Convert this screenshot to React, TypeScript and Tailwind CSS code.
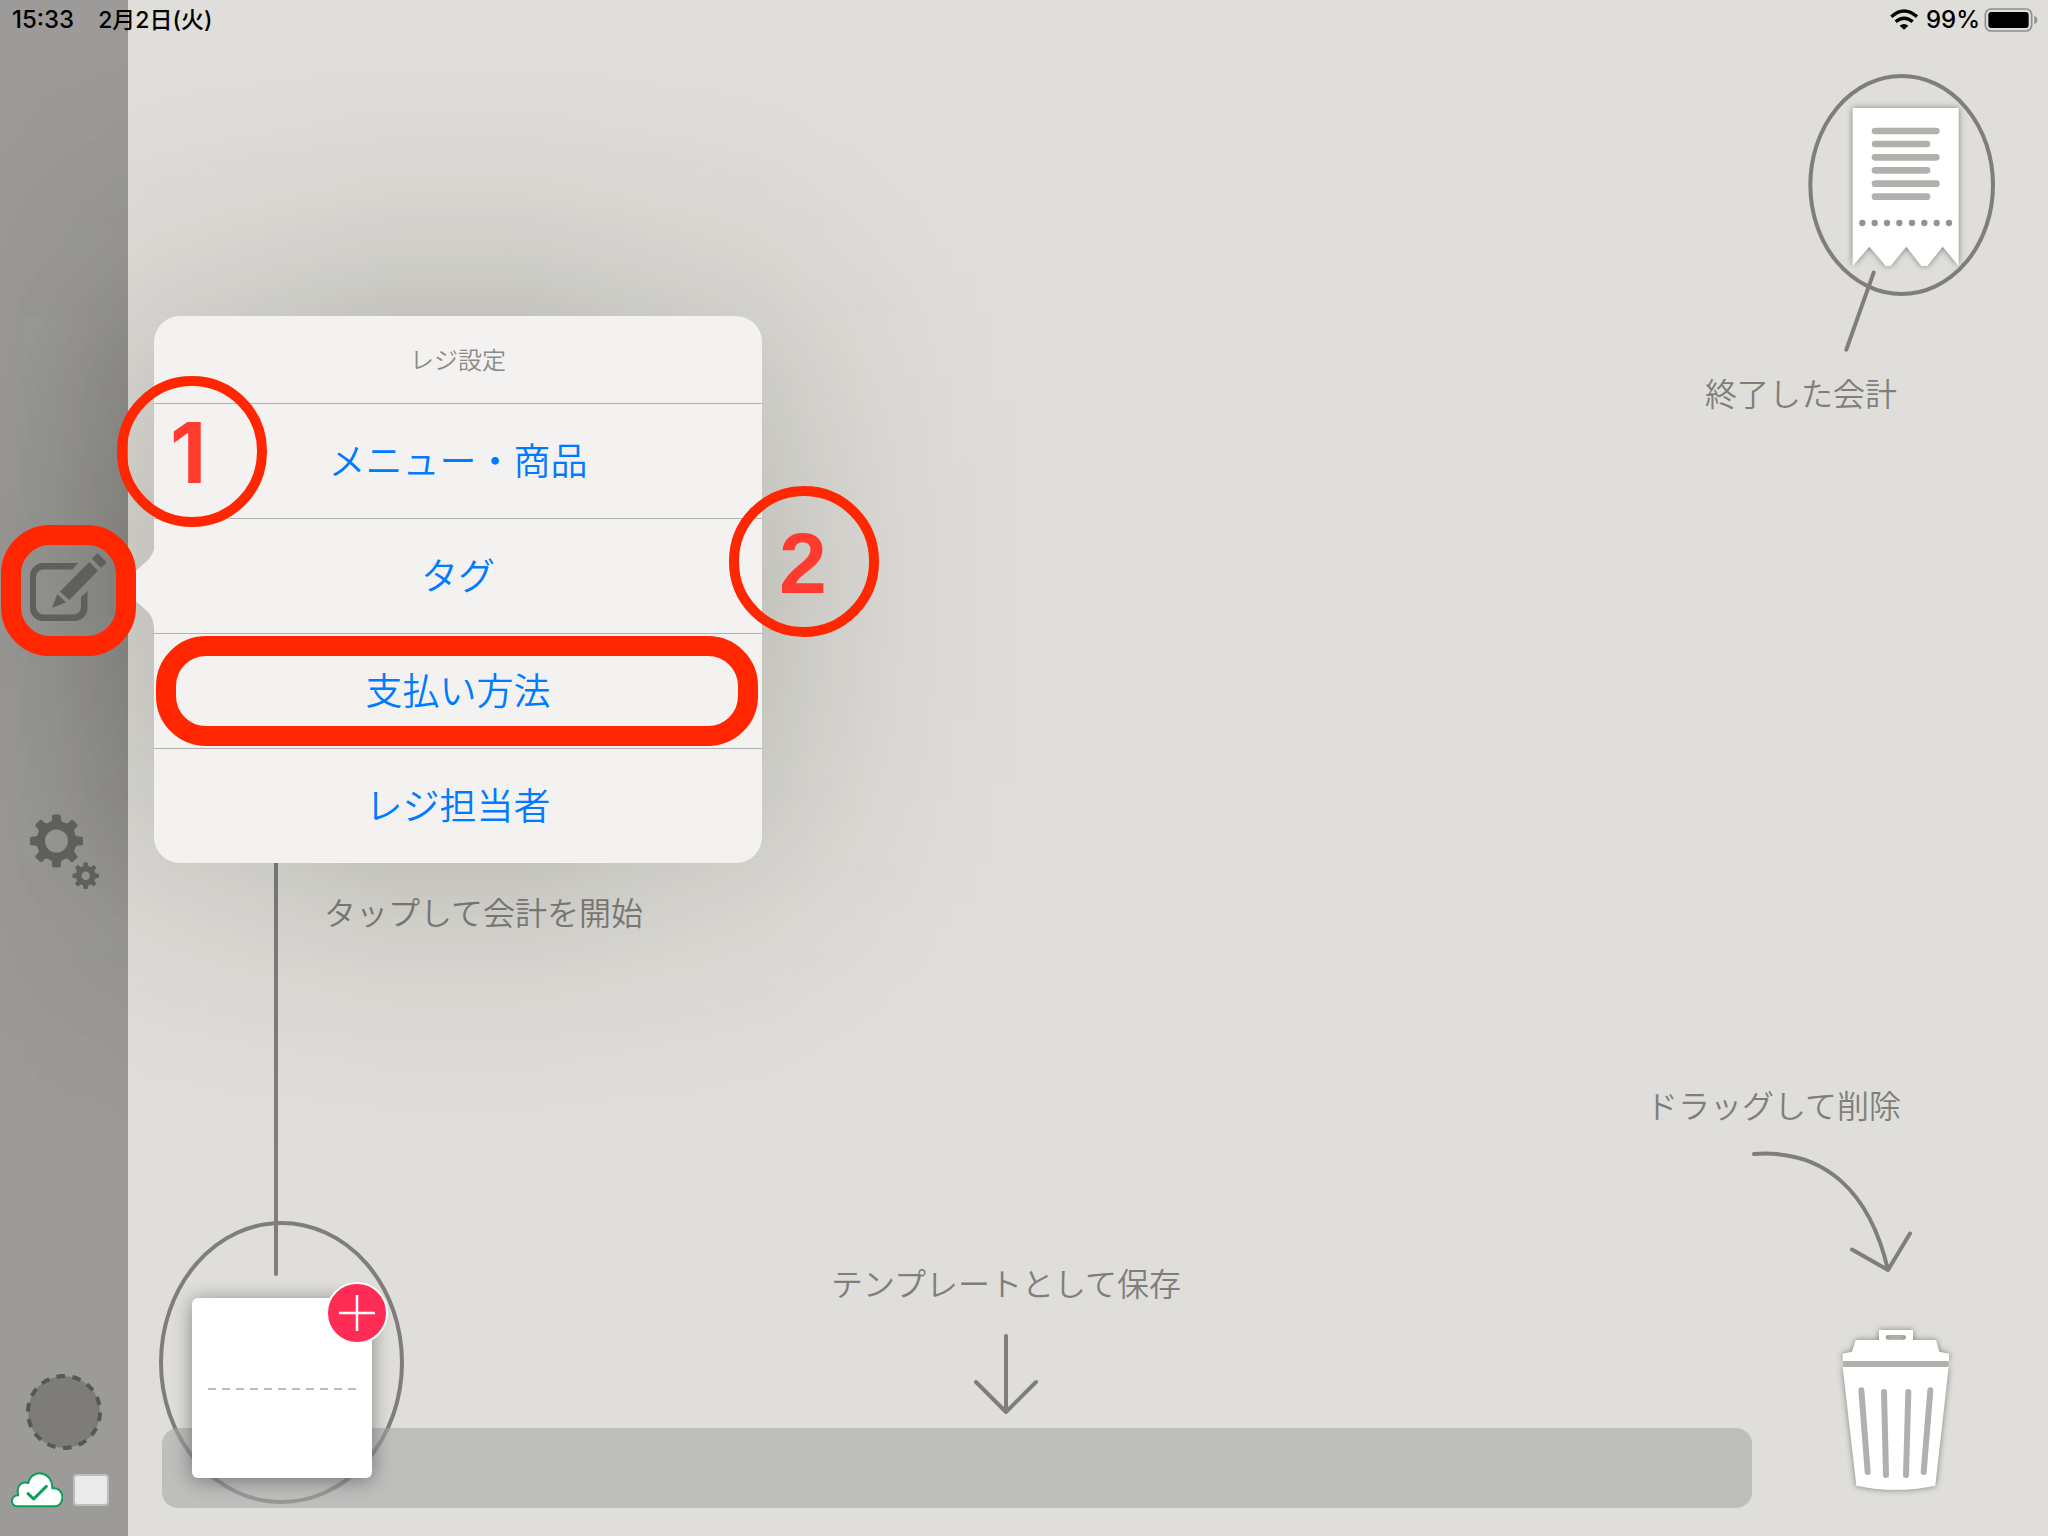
const ANGLES = [0, 45, 90, 135, 180, 225, 270, 315];

function StatusBar() {
  return (
    <header className="pointer-events-none absolute inset-x-0 top-0 z-30 flex h-10 items-center justify-between pl-3 pr-2.5 font-['Inter','Noto_Sans_CJK_JP',sans-serif] text-2xl font-medium text-black">
      <div className="flex items-center gap-6">
        <time>15:33</time>
        <span className="text-[23px]">2月2日(火)</span>
      </div>
      <div className="flex items-center">
        <svg viewBox="90 28 84 66" className="mr-2 h-[22px] w-7" fill="none" stroke="#000" strokeWidth="10" aria-hidden="true">
          <path d="M94 51Q132 17 171 51" />
          <path d="M107 66Q132 45 158 66" />
          <path d="M132 90 119 78Q132 68 145 78Z" fill="#000" stroke="none" />
        </svg>
        <span>99%</span>
        <svg viewBox="374 22 162 76" className="ml-1 h-[26px] w-[54px]" aria-hidden="true">
          <rect x="378" y="27" width="139" height="66" rx="17" fill="none" stroke="#8e8e8b" strokeWidth="5" />
          <rect x="387" y="36" width="121" height="48" rx="9" />
          <path d="M525 48Q534 51 534 60T525 72Z" fill="#8e8e8b" />
        </svg>
      </div>
    </header>
  );
}

function EditIcon() {
  return (
    <svg viewBox="0 548 128 80" className="h-20 w-32" fill="#5f5f5d" aria-hidden="true">
      <path d="M78 563H43A13 13 0 0 0 30 576V608A13 13 0 0 0 43 621H74.500A13 13 0 0 0 87.500 608V591L81 597V607A7.500 7.500 0 0 1 73.500 614.500H43.500A7.500 7.500 0 0 1 36 607V577A7.500 7.500 0 0 1 43.500 569.500H72.500Z" />
      <path d="M52 608 57.300 594 66 602.300Z" />
      <path d="M60 591.500 89.300 562 98 570.700 69.300 600Z" />
      <path d="M92 558.500 96 554.500Q97.500 553 99 554.500L105.500 561Q107 562.500 105.500 564L101 568Z" />
    </svg>
  );
}

function Gear({ cx, cy, scale }: { cx: number; cy: number; scale: number }) {
  return (
    <g transform={`translate(${cx} ${cy}) scale(${scale})`}>
      <circle r={scale < 1 ? 14 : 15.7} fill="none" stroke="#5f5f5d" strokeWidth={scale < 1 ? 11 : 8.4} />
      {ANGLES.map((a) => (
        <path key={a} transform={`rotate(${a})`} d="M-8 -18Q-4.500 -19 -4.500 -22V-24.500Q-4.500 -26.500 -2.500 -26.500H2.500Q4.500 -26.500 4.500 -24.500V-22Q4.500 -19 8 -18Z" />
      ))}
    </g>
  );
}

function GearsIcon() {
  return (
    <svg viewBox="0 812 128 80" className="h-20 w-32" fill="#5f5f5d" aria-hidden="true">
      <Gear cx={56.5} cy={841} scale={1} />
      <Gear cx={85.7} cy={875.7} scale={0.5} />
    </svg>
  );
}

const ITEMS = ["メニュー・商品", "タグ", "支払い方法", "レジ担当者"];

/* Wide soft shadow: a horizontal falloff multiplied by a vertical one. */
function PopoverShadow() {
  return (
    <>
      <div className="pointer-events-none absolute -left-[146px] -top-[532px] h-[1147px] w-[1208px] bg-[linear-gradient(90deg,rgba(24,20,4,0)_0,rgba(24,20,4,0.006)_60px,rgba(24,20,4,0.018)_120px,rgba(24,20,4,0.042)_180px,rgba(24,20,4,0.081)_240px,rgba(24,20,4,0.13)_300px,rgba(24,20,4,0.26)_540px,rgba(24,20,4,0.26)_calc(100%-540px),rgba(24,20,4,0.13)_calc(100%-300px),rgba(24,20,4,0.081)_calc(100%-240px),rgba(24,20,4,0.042)_calc(100%-180px),rgba(24,20,4,0.018)_calc(100%-120px),rgba(24,20,4,0.006)_calc(100%-60px),rgba(24,20,4,0)_100%)] [mask-image:linear-gradient(180deg,rgba(0,0,0,0)_0,rgba(0,0,0,0.025)_60px,rgba(0,0,0,0.07)_120px,rgba(0,0,0,0.163)_180px,rgba(0,0,0,0.31)_240px,rgba(0,0,0,0.5)_300px,rgba(0,0,0,0.69)_360px,rgba(0,0,0,0.84)_420px,rgba(0,0,0,0.93)_480px,rgba(0,0,0,1)_570px,rgba(0,0,0,0.93)_calc(100%-480px),rgba(0,0,0,0.84)_calc(100%-420px),rgba(0,0,0,0.69)_calc(100%-360px),rgba(0,0,0,0.5)_calc(100%-300px),rgba(0,0,0,0.31)_calc(100%-240px),rgba(0,0,0,0.163)_calc(100%-180px),rgba(0,0,0,0.07)_calc(100%-120px),rgba(0,0,0,0.025)_calc(100%-60px),rgba(0,0,0,0)_100%)]" />
      <div className="pointer-events-none absolute -top-[532px] left-0 h-[1147px] w-32 bg-[linear-gradient(90deg,rgba(20,24,16,0.02),rgba(20,24,16,0.05)_50%,rgba(20,24,16,0.11))] [mask-image:linear-gradient(180deg,rgba(0,0,0,0)_0,rgba(0,0,0,0.07)_120px,rgba(0,0,0,0.31)_240px,rgba(0,0,0,0.69)_360px,rgba(0,0,0,0.93)_480px,rgba(0,0,0,1)_570px,rgba(0,0,0,0.93)_calc(100%-480px),rgba(0,0,0,0.69)_calc(100%-360px),rgba(0,0,0,0.31)_calc(100%-240px),rgba(0,0,0,0.07)_calc(100%-120px),rgba(0,0,0,0)_100%)]" />
    </>
  );
}

function Popover() {
  return (
    <div className="absolute -top-[232px] left-[154px] z-10 w-[608px] rounded-[26px] bg-[#f3f2f1]">
      <svg viewBox="0 0 27 108" className="absolute -left-[26px] top-[217px] h-[108px] w-[27px]" fill="#f3f2f1" aria-hidden="true">
        <path d="M27 0C27 16 26 20 20 27L2 43Q-2 54 2 63L20 79C26 86 26 92 27 108Z" />
      </svg>
      <h2 className="flex h-[87px] items-center justify-center text-2xl text-[#8a8a88]">レジ設定</h2>
      <ul>
        {ITEMS.map((item, i) => (
          <li key={item} className="relative h-[115px] border-t border-[#b1b1af]">
            <button className="h-full w-full pb-0.5 text-[37px] text-[#007aff]">{item}</button>
            {i === 2 && (
              <span className="pointer-events-none absolute inset-x-0.5 inset-y-0.5 mr-0.5 rounded-[50px] border-[20px] border-[#ff2600]" />
            )}
          </li>
        ))}
      </ul>
      <div className="absolute -left-[37px] top-[60px] flex h-[151px] w-[150px] items-center justify-center rounded-full border-[10px] border-[#ff2600] pr-2 pt-1 font-['Inter',sans-serif] text-[84px] font-bold text-[#ff3b30]">
        1
      </div>
      <div className="absolute left-[575px] top-[170px] flex h-[151px] w-[150px] items-center justify-center rounded-full border-[10px] border-[#ff2600] pr-0.5 pt-1 font-['Liberation_Sans',sans-serif] text-[86px] font-bold text-[#ff3b30]">
        2
      </div>
    </div>
  );
}

function Sidebar() {
  return (
    <aside className="relative z-20 flex w-32 shrink-0 flex-col bg-[#9c9b99]">
      <nav className="flex flex-1 flex-col justify-center gap-[184px] pt-[68px]">
        <div className="relative">
          <PopoverShadow />
          <button aria-label="レジ設定" className="relative block">
            <EditIcon />
          </button>
          <Popover />
          <span className="pointer-events-none absolute -top-[23px] left-px z-20 h-[131px] w-[135px] rounded-[49px] border-[20px] border-[#ff2600]" />
        </div>
        <button aria-label="設定" className="relative block">
          <GearsIcon />
        </button>
      </nav>
      <div className="flex flex-col items-center gap-5 pb-7">
        <svg viewBox="0 0 80 80" className="size-20" aria-hidden="true">
          <circle cx="40" cy="41" r="36" fill="#7d7c79" />
          <circle cx="40" cy="41" r="36" fill="none" stroke="#575755" strokeWidth="4" pathLength="140" strokeDasharray="5.300 4.700" transform="rotate(-102 40 41)" />
        </svg>
        <div className="flex w-full items-center gap-2.5 pl-[11px]">
          <svg viewBox="33 364 156 111" className="h-[37px] w-[52px]" fill="#fff" stroke="#0b9f58" strokeLinecap="round" strokeLinejoin="round" aria-hidden="true">
            <path strokeWidth="6" d="M52 470C30 470 30 438 55 437C48 412 62 393 85 400C92 358 157 360 157 416C196 411 196 470 164 470Z" />
            <path fill="none" strokeWidth="9" d="M84 432 101 448 139 410" />
          </svg>
          <div className="h-8 w-9 rounded border-2 border-[#bdbdbb] bg-[#eaeaea]" />
        </div>
      </div>
    </aside>
  );
}

function FinishedBills() {
  return (
    <figure className="mr-[52px] mt-[74px] flex w-[291px] flex-col self-end">
      <svg viewBox="384 42 564 834" className="h-[278px] w-[188px] self-end" aria-hidden="true">
        <g className="drop-shadow-[0_0_10px_rgba(60,60,50,0.6)]">
          <path fill="#fff" d="M518 144H836V618L788 560 742 618H724L679 560 632 618H617L568 560 518 618Z" />
        </g>
        <g stroke="#b1b0ac" strokeWidth="20" strokeLinecap="round">
          {[213, 252, 292, 331, 371, 410].map((y, i) => (
            <path key={y} d={`M585 ${y}H${i % 2 ? 741 : 769}`} />
          ))}
        </g>
        {[547, 584, 621, 658, 696, 733, 770, 807].map((x) => (
          <circle key={x} cx={x} cy="489" r="9.500" fill="#94938f" />
        ))}
        <g fill="none" stroke="#7f7e7c" strokeWidth="12" strokeLinecap="round">
          <ellipse cx="665" cy="375" rx="274" ry="327" />
          <path d="M581 638 499 869" />
        </g>
      </svg>
      <figcaption className="mt-4">終了した会計</figcaption>
    </figure>
  );
}

function NewBill() {
  return (
    <>
      <svg viewBox="156 860 252 648" className="absolute bottom-7 left-7 h-[648px] w-[252px]" fill="none" stroke="#7f7e7c" strokeWidth="4" strokeLinecap="round" aria-hidden="true">
        <path d="M276 860V1274" />
        <ellipse cx="281.500" cy="1362.500" rx="120.500" ry="139.500" />
      </svg>
      <p className="absolute bottom-[601px] left-[196px]">タップして会計を開始</p>
    </>
  );
}

function NewBillTile() {
  return (
    <button aria-label="会計を開始" className="absolute bottom-[58px] left-16 flex size-[180px] items-center rounded-md bg-white px-4 shadow-[0_2px_20px_rgba(0,0,0,0.4)]">
      <svg viewBox="0 0 148 4" className="h-1 w-[148px]" aria-hidden="true">
        <path d="M0 3H148" stroke="#bbb" strokeWidth="2" strokeDasharray="8 6" />
      </svg>
      <svg viewBox="-31 -31 62 62" className="absolute -right-4 -top-4 size-[62px]" aria-hidden="true">
        <circle r="30" fill="#ff2d55" stroke="#fff" strokeWidth="2" />
        <path d="M-18 0H18M0 -18V18" stroke="#fff" strokeWidth="2.500" />
      </svg>
    </button>
  );
}

function TrashIcon() {
  return (
    <svg viewBox="699 780 378 528" className="h-44 w-[126px]" aria-hidden="true">
      <g className="drop-shadow-[0_0_10px_rgba(60,60,50,0.6)]">
        <path fill="#fff" fillRule="evenodd" d="M837 810H939V840H1008L1018 875 1047 881V903H728V881L756 875 767 840H837ZM864 825A7 7 0 0 0 864 839H911A7 7 0 0 0 911 825Z" />
        <path fill="#fff" d="M728 921H1046L1006 1277Q887 1302 769 1277Z" />
      </g>
      <path fill="#b1b0ac" d="M730 904H1045V920H730Z" />
      <g stroke="#b1b0ac" strokeWidth="18" strokeLinecap="round">
        <path d="M784 991 803 1236M852 996 858 1245M925 996 918 1245M991 991 971 1236" />
      </g>
    </svg>
  );
}

export default function App() {
  return (
    <div className="relative flex min-h-screen overflow-hidden bg-[#dfdeda] font-['Noto_Sans_CJK_JP',sans-serif] font-[350]">
      <StatusBar />
      <Sidebar />
      <main className="flex flex-1 flex-col justify-between text-[32px] leading-[48px] text-[#7f7e7c]">
        <FinishedBills />
        <div className="flex items-end">
          <section className="relative flex-1 pb-7 pl-[34px]">
            <NewBill />
            <div className="flex flex-col items-center pl-[98px]">
              <p>テンプレートとして保存</p>
              <svg viewBox="972 1330 68 88" className="mb-2.5 mt-6 h-[88px] w-[68px]" fill="none" stroke="#7f7e7c" strokeWidth="4" strokeLinecap="round" strokeLinejoin="round" aria-hidden="true">
                <path d="M1006 1336V1412M976 1382 1006 1412 1036 1382" />
              </svg>
            </div>
            <div className="relative h-20 rounded-2xl bg-[#a8a8a8]/60" />
            <NewBillTile />
          </section>
          <section className="flex w-[296px] flex-col items-end pb-10">
            <p className="mb-5 mr-[147px] whitespace-nowrap">ドラッグして削除</p>
            <svg viewBox="1748 1148 168 128" className="mb-11 mr-[132px] h-32 w-[168px]" fill="none" stroke="#7f7e7c" strokeWidth="4" strokeLinecap="round" strokeLinejoin="round" aria-hidden="true">
              <path d="M1754 1154C1825 1149 1870 1192 1888 1270M1852 1249.500 1888 1270 1910 1233.500" />
            </svg>
            <button aria-label="削除" className="mr-[89px]">
              <TrashIcon />
            </button>
          </section>
        </div>
      </main>
    </div>
  );
}
